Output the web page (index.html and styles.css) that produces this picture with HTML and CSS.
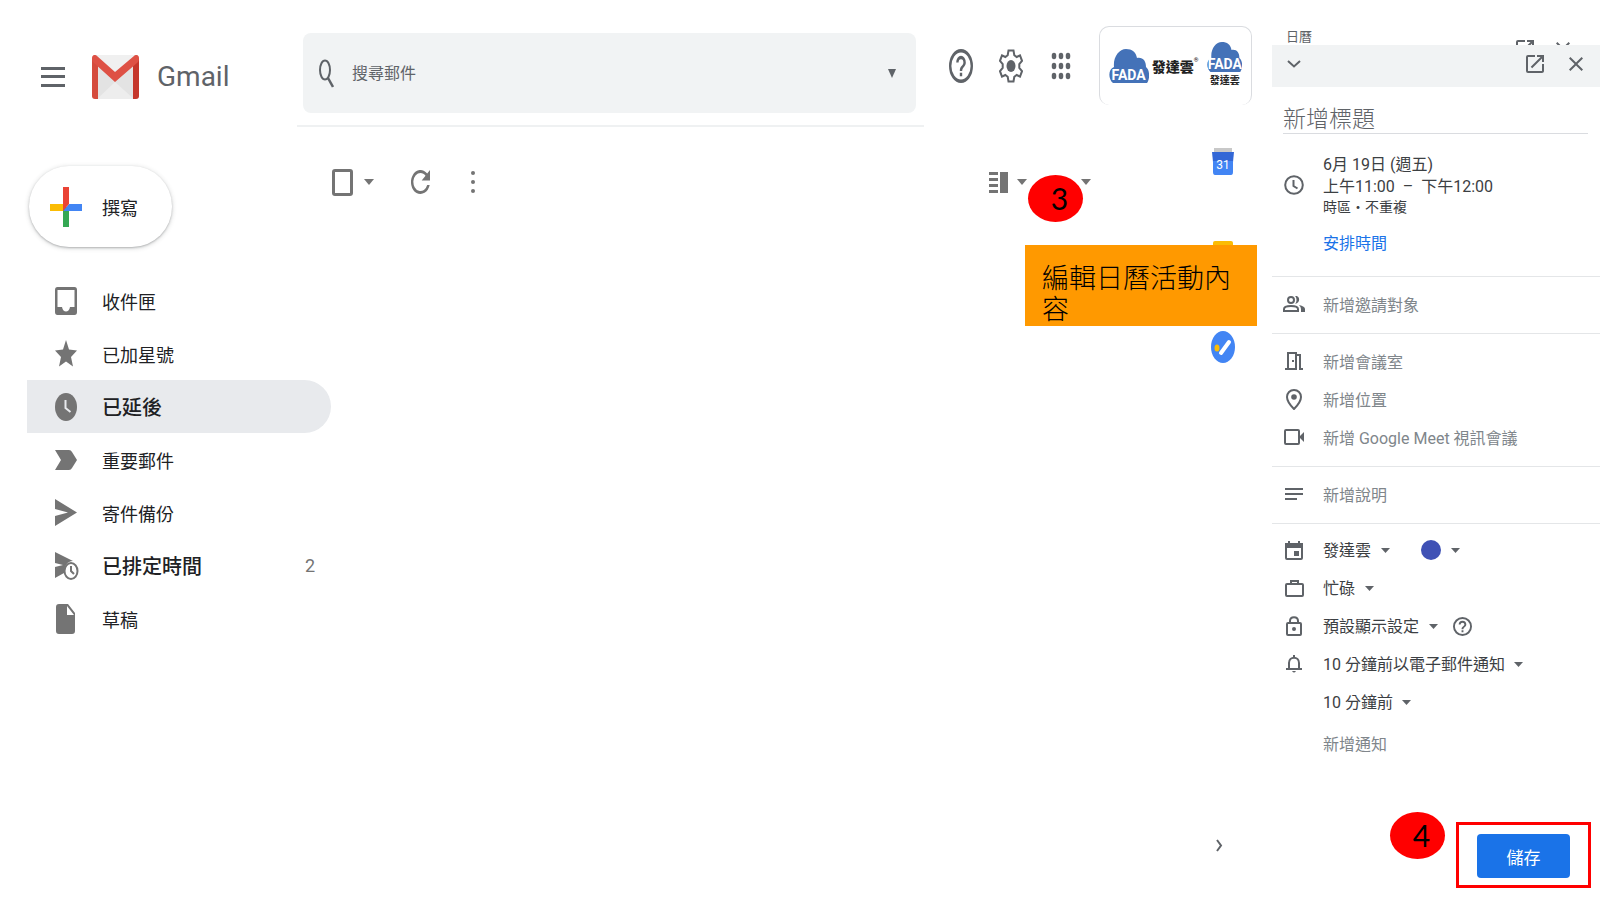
FILE: index.html
```
<!DOCTYPE html>
<html lang="zh-Hant">

<head>
  <meta charset="UTF-8">
  <meta name="viewport" content="width=device-width, initial-scale=1.0">
  <title>Gmail</title>
  <link rel="stylesheet" href="styles.css">
</head>

<body>
  <!-- shared shapes -->
  <svg class="defs" width="0" height="0" aria-hidden="true">
    <symbol id="arrow" viewBox="0 0 10 6" preserveAspectRatio="none"><path d="M0 0h10L5 6z" /></symbol>
    <symbol id="open" viewBox="0 0 24 24"><path d="M19 19H5V5h7V3H5a2 2 0 0 0-2 2v14a2 2 0 0 0 2 2h14c1.100 0 2-.9 2-2v-7h-2zM14 3v2h3.590l-9.830 9.830 1.410 1.410L19 6.410V10h2V3z" /></symbol>
    <symbol id="close" viewBox="0 0 24 24"><path d="M19 6.410L17.590 5 12 10.590 6.410 5 5 6.410 10.590 12 5 17.590 6.410 19 12 13.410 17.590 19 19 17.590 13.410 12z" /></symbol>
    <symbol id="help" viewBox="2 2 20 20" preserveAspectRatio="none"><path d="M11 18h2v-2h-2zm1-16a10 10 0 1 0 0 20 10 10 0 0 0 0-20zm0 18a8 8 0 1 1 0-16 8 8 0 0 1 0 16zm0-14a4 4 0 0 0-4 4h2a2 2 0 1 1 4 0c0 2-3 1.750-3 5h2c0-2.250 3-2.500 3-5a4 4 0 0 0-4-4z" /></symbol>
    <symbol id="cloud" viewBox="0 0 40 34" preserveAspectRatio="none"><path d="M4 34C-1 30-1 20 5 18 4 8 10 0 17 0c6 0 10 3 11 9 6-1 9 3 9 9 4 3 4 12 1 16z" /></symbol>
  </svg>

  <div class="mail">
    <header class="header">
      <div class="brand">
        <button class="icon-button" aria-label="主選單">
          <svg width="24" height="20" viewBox="0 0 24 20"><path d="M0 0h24v3H0zM0 8h24v3H0zM0 17h24v3H0z" /></svg>
        </button>
        <svg class="logo" width="47" height="44" viewBox="0 0 47 44" preserveAspectRatio="none">
          <path fill="#e3e3e3" d="M3 0h41v44H3z" />
          <path fill="#f0f0f0" d="M4 0h39L23 20z" />
          <path fill="#ededed" d="M5 44l18-17 19 17z" />
          <path fill="#d54b3d" d="M0 3l6 5v36H3c-2 0-3-1-3-3z" />
          <path fill="#c5372c" d="M47 3l-6 5v36h3c2 0 3-1 3-3z" />
          <path fill="#de5145" d="M0 3c0-3 3-4 5-2l18 16L42 1c2-2 5-1 5 2 0 2 0 3-2 5L23 27 2 8C0 6 0 5 0 3z" />
        </svg>
        <span class="brand-name">Gmail</span>
      </div>

      <div class="search-wrap">
        <form class="search">
          <svg width="15" height="29" viewBox="0 0 15 29" class="line"><ellipse cx="6" cy="11" rx="5" ry="9.500" /><path d="M9 19l5 9" stroke-width="2.500" /></svg>
          <input type="text" placeholder="搜尋郵件" aria-label="搜尋郵件">
          <svg class="arrow" width="8" height="9"><use href="#arrow" /></svg>
        </form>
      </div>

      <div class="tools">
        <button class="icon-button" aria-label="說明"><svg width="24" height="34"><use href="#help" /></svg></button>
        <button class="icon-button" aria-label="設定">
          <svg width="24" height="34" viewBox="0 0 24 34">
            <path class="line" d="M9.500 1.500h5l.8 4.700 2.400 1.800 3.300-1.700 2 5.500-2.700 3.200v4l2.700 3.200-2 5.500-3.300-1.700-2.400 1.800-.8 4.700h-5l-.8-4.700L6.300 26 3 27.700l-2-5.500L3.700 19v-4L1 11.800l2-5.500L6.300 8l2.400-1.800z" />
            <ellipse cx="12" cy="17" rx="4.500" ry="6" />
          </svg>
        </button>
        <button class="icon-button" aria-label="Google 應用程式">
          <svg width="20" height="28" viewBox="0 0 20 28">
            <g id="dots"><ellipse cx="3" cy="4" rx="2.300" ry="3.200" /><ellipse cx="10" cy="4" rx="2.300" ry="3.200" /><ellipse cx="17" cy="4" rx="2.300" ry="3.200" /></g>
            <use href="#dots" y="10" />
            <use href="#dots" y="20" />
          </svg>
        </button>
        <button class="account" aria-label="帳戶">
          <span class="fada"><svg width="40" height="34"><use href="#cloud" /></svg><b>FADA</b></span>
          <span class="company">發達雲<sup>®</sup></span>
          <span class="avatar">
            <span class="fada"><svg width="35" height="30"><use href="#cloud" /></svg><b>FADA</b></span>
            <small>發達雲</small>
          </span>
        </button>
      </div>
    </header>

    <div class="workspace">
      <aside class="sidebar">
        <button class="compose">
          <svg width="32" height="40" viewBox="0 0 32 40">
            <path fill="#fbbc04" d="M0 17h13v7H0z" /><path fill="#34a853" d="M13 20h6v20h-6z" />
            <path fill="#4285f4" d="M19 17h13v7H13z" /><path fill="#ea4335" d="M13 0h6v17l-6 7z" />
          </svg>
          撰寫
        </button>
        <nav>
          <a href="#inbox">
            <svg width="22" height="28" viewBox="0 0 22 28"><path fill-rule="evenodd" d="M2.500 0h17Q22 0 22 3v22q0 3-2.500 3h-17Q0 28 0 25V3Q0 0 2.500 0zM2.500 3v17h4.500c1 6 7 6 8 0h4.500V3z" /></svg>收件匣</a>
          <a href="#starred">
            <svg width="22" height="27" viewBox="0 0 22 27"><path d="M11 0l3 9.500 8 1-6 6.500 2 9.500-7-5-7 5L6 17l-6-6.500 8-1z" /></svg>已加星號</a>
          <a href="#snoozed" class="active">
            <svg width="22" height="28" viewBox="0 0 22 28"><ellipse cx="11" cy="14" rx="11" ry="14" /><path class="cut" d="M10.500 7v8l5 4" /></svg>已延後</a>
          <a href="#important">
            <svg width="22" height="20" viewBox="0 0 22 20"><path d="M0 0h14q2 0 3 2l5 8-5 8q-1 2-3 2H0l6-10z" /></svg>重要郵件</a>
          <a href="#sent">
            <svg width="22" height="27" viewBox="0 0 22 27"><path d="M0 0l22 13.500L0 27V17l13-3.500L0 10z" /></svg>寄件備份</a>
          <a href="#scheduled" class="unread">
            <svg width="24" height="28" viewBox="0 0 24 28"><path d="M0 0l18 9c-6 0-9 5-9 12l-9 5V15l8-2-8-2z" /><ellipse class="clock" cx="16" cy="19" rx="6.500" ry="8" /><path class="clock" d="M16 14v5l3 3" /></svg>已排定時間<span class="count">2</span></a>
          <a href="#drafts">
            <svg width="22" height="30" viewBox="0 0 22 30"><path fill-rule="evenodd" d="M4 0h9l7 9v18q0 3-3 3H4q-3 0-3-3V3q0-3 3-3zM12 2v9h7z" /></svg>草稿</a>
        </nav>
      </aside>

      <main class="content">
        <div class="toolbar">
          <input type="checkbox" aria-label="選取">
          <svg class="arrow" width="10" height="6"><use href="#arrow" /></svg>
          <button class="icon-button refresh" aria-label="重新整理">
            <svg width="19" height="24" viewBox="4 4 16 16" preserveAspectRatio="none"><path d="M17.650 6.350A8 8 0 1 0 19.730 14h-2.080A6 6 0 1 1 12 6c1.660 0 3.140.69 4.220 1.780L13 11h7V4z" /></svg>
          </button>
          <button class="icon-button" aria-label="更多">
            <svg width="4" height="24" viewBox="0 0 4 24"><circle cx="2" cy="3" r="2" /><circle cx="2" cy="12" r="2" /><circle cx="2" cy="21" r="2" /></svg>
          </button>
          <button class="icon-button split" aria-label="切換分割窗格模式">
            <svg width="19" height="21" viewBox="0 0 19 21"><path d="M0 0h9v3H0zM0 6h9v3H0zM0 12h9v3H0zM0 18h9v3H0zM11 0h8v21h-8z" /></svg>
            <svg class="arrow" width="10" height="6"><use href="#arrow" /></svg>
          </button>
          <button class="icon-button" aria-label="輸入工具"><svg class="arrow" width="10" height="6"><use href="#arrow" /></svg></button>
        </div>
      </main>

      <aside class="rail">
        <button class="icon-button" aria-label="日曆">
          <svg width="22" height="27" viewBox="0 0 22 27"><path fill="#c8c8c8" d="M2 0h18v5H2z" /><path fill="#3367d6" d="M0 4h22l-1 10H1z" /><path fill="#4285f4" d="M1 13h20v11q0 3-2 3H3q-2 0-2-3z" /><text x="11" y="21" text-anchor="middle">31</text></svg>
        </button>
        <button class="icon-button" aria-label="Keep">
          <svg width="20" height="27" viewBox="0 0 20 27"><rect width="20" height="27" rx="2" fill="#fbbc04" /><circle cx="10" cy="8" r="4" fill="#fff" /></svg>
        </button>
        <button class="icon-button" aria-label="Tasks">
          <svg width="24" height="32" viewBox="0 0 24 32"><ellipse cx="12" cy="16" rx="12" ry="16" fill="#4285f4" /><path d="M10 22l8-11" stroke="#fff" stroke-width="4" stroke-linecap="round" /><ellipse cx="6" cy="17" rx="2.500" ry="3.500" fill="#fbbc04" /></svg>
        </button>
        <button class="icon-button collapse" aria-label="隱藏側邊面板">
          <svg width="7" height="13" viewBox="0 0 7 13" class="line"><path d="M1 1l4 5.500L1 12" /></svg>
        </button>
      </aside>
    </div>

    <div class="badge badge-edit">3</div>
    <div class="callout">編輯日曆活動內容</div>
  </div>

  <aside class="calendar">
    <div class="calendar-top">
      <span>日曆</span>
      <svg width="24" height="24"><use href="#open" /></svg>
      <svg width="24" height="24"><use href="#close" /></svg>
    </div>
    <div class="calendar-bar">
      <button class="icon-button" aria-label="收合"><svg width="14" height="8" viewBox="0 0 14 8" class="line"><path d="M1 1l6 5.500L13 1" /></svg></button>
      <button class="icon-button end" aria-label="開啟"><svg width="24" height="24"><use href="#open" /></svg></button>
      <button class="icon-button" aria-label="關閉"><svg width="24" height="24"><use href="#close" /></svg></button>
    </div>
    <input class="title" type="text" placeholder="新增標題" aria-label="新增標題">

    <div class="time">
      <span class="icon"><svg width="20" height="20" viewBox="0 0 20 20" class="line"><circle cx="10" cy="10" r="8.800" /><path d="M9.500 5v6l4 2.500" /></svg></span>
      <div class="when">
        <p>6月 19日 (週五)</p>
        <p>上午11:00 &nbsp;– &nbsp;下午12:00</p>
        <p class="zone">時區・不重複</p>
      </div>
      <a href="#schedule">安排時間</a>
    </div>

    <section>
      <button class="row"><span class="icon"><svg width="22" height="16" viewBox="0 0 22 16"><g class="line"><circle cx="8" cy="4" r="3" /><path d="M1 15v-2c0-4 14-4 14 0v2z" /></g><path d="M12 0c5-1 6 7 0 8 2-2 2-6 0-8zM16 9c4 1 6 2 6 4v3h-4v-3q0-2-2-4z" /></svg></span>新增邀請對象</button>
    </section>

    <section>
      <button class="row"><span class="icon"><svg width="18" height="18" viewBox="0 0 18 18" class="line"><path d="M0 17h3V1h8v16H3M11 3h4v14h3" /><path d="M8 8v2" /></svg></span>新增會議室</button>
      <button class="row"><span class="icon"><svg width="16" height="21" viewBox="0 0 16 21"><path class="line" d="M8 1C4 1 1 4 1 8c0 5 7 12 7 12s7-7 7-12c0-4-3-7-7-7z" /><circle cx="8" cy="8" r="2.800" /></svg></span>新增位置</button>
      <button class="row"><span class="icon"><svg width="20" height="16" viewBox="0 0 20 16"><rect class="line" x="1" y="1" width="14" height="14" rx="1" /><path d="M15 8l5-5v10z" /></svg></span>新增 Google Meet 視訊會議</button>
    </section>

    <section>
      <button class="row"><span class="icon"><svg width="18" height="12" viewBox="0 0 18 12"><path d="M0 0h18v2H0zM0 5h18v2H0zM0 10h12v2H0z" /></svg></span>新增說明</button>
    </section>

    <section class="options">
      <div class="row">
        <span class="icon"><svg width="18" height="19" viewBox="0 0 18 19"><rect class="line" x="1" y="3" width="16" height="15" rx="1" /><path d="M0 2h3V0h2v2h8V0h2v2h3v5H0zM9 10h5v5H9z" /></svg></span>
        <select aria-label="日曆"><option>發達雲</option></select>
        <svg class="arrow" width="9" height="5"><use href="#arrow" /></svg>
        <button class="color" aria-label="顏色"><span></span><svg class="arrow" width="9" height="5"><use href="#arrow" /></svg></button>
      </div>
      <div class="row">
        <span class="icon"><svg width="19" height="17" viewBox="0 0 19 17" class="line"><rect x="1" y="4" width="17" height="12" rx="1" /><path d="M6 4V1h7v3" /></svg></span>
        <select aria-label="狀態"><option>忙碌</option></select>
        <svg class="arrow" width="9" height="5"><use href="#arrow" /></svg>
      </div>
      <div class="row">
        <span class="icon"><svg width="16" height="20" viewBox="0 0 16 20"><rect class="line" x="1" y="7" width="14" height="12" rx="1" /><path class="line" d="M4 7V5c0-5 8-5 8 0v2" /><circle cx="8" cy="13" r="2" /></svg></span>
        <select aria-label="瀏覽權限"><option>預設顯示設定</option></select>
        <svg class="arrow" width="9" height="5"><use href="#arrow" /></svg>
        <button class="icon-button" aria-label="說明"><svg width="19" height="19"><use href="#help" /></svg></button>
      </div>
      <div class="row">
        <span class="icon"><svg width="16" height="18" viewBox="0 0 16 18"><path class="line" d="M0 14h16M3 14V8c0-7 10-7 10 0v6M8 0v3" /><path d="M6 16h4q-2 3-4 0z" /></svg></span>
        <select aria-label="通知 1"><option>10 分鐘前以電子郵件通知</option></select>
        <svg class="arrow" width="9" height="5"><use href="#arrow" /></svg>
      </div>
      <div class="row">
        <span class="icon"></span>
        <select aria-label="通知 2"><option>10 分鐘前</option></select>
        <svg class="arrow" width="9" height="5"><use href="#arrow" /></svg>
      </div>
      <button class="row add-notice"><span class="icon"></span>新增通知</button>
    </section>

    <footer class="calendar-footer">
      <div class="badge badge-save">4</div>
      <div class="save-frame"><button class="save">儲存</button></div>
    </footer>
  </aside>
</body>

</html>
```
FILE: styles.css
```
* {
  box-sizing: border-box;
}

body {
  margin: 0;
  min-height: 100vh;
  display: flex;
  background-color: #fff;
  color: #202124;
  font-family: Roboto, "Noto Sans CJK TC", sans-serif;
  font-size: 16px;
}

button,
input,
select {
  font: inherit;
  color: inherit;
  border: 0;
  padding: 0;
  background: none;
}

button {
  cursor: pointer;
}

a {
  text-decoration: none;
}

svg {
  fill: #5f6368;
  flex: none;
}

.defs {
  position: absolute;
}

.line {
  fill: none;
  stroke: #5f6368;
  stroke-width: 2;
}

.icon-button {
  display: flex;
  align-items: center;
  justify-content: center;
}

.arrow {
  fill: #5f6368;
}

/* mail */
.mail {
  position: relative;
  flex: 1;
  display: flex;
  flex-direction: column;
}

.header {
  display: flex;
  padding-top: 26px;
}

.brand {
  width: 297px;
  display: flex;
  align-items: center;
  padding-left: 41px;
}

.logo {
  margin: 0 18px 0 27px;
}

.brand-name {
  font-size: 28px;
  color: #5f6368;
}

.search-wrap {
  flex: 1;
  padding: 7px 8px 12px 6px;
  border-bottom: 2px solid #eff1f2;
}

.search {
  height: 80px;
  display: flex;
  align-items: center;
  gap: 18px;
  padding: 0 20px 0 16px;
  border-radius: 8px;
  background-color: #f1f3f4;
}

.search input {
  flex: 1;
  min-width: 0;
  outline: none;
}

.search input::placeholder,
.title::placeholder {
  color: #5f6368;
  opacity: 1;
}

.tools {
  display: flex;
  align-items: flex-start;
  margin: 0 20px 0 25px;
}

.tools .icon-button {
  width: 24px;
  height: 80px;
  margin-right: 26px;
}

.account {
  width: 153px;
  height: 79px;
  display: flex;
  align-items: center;
  justify-content: center;
  gap: 3px;
  border: 1px solid #dadce0;
  border-bottom: 0;
  border-radius: 10px;
}

.fada {
  display: grid;
  justify-items: center;
  align-items: end;
}

.fada svg {
  fill: #4472b8;
}

.fada svg,
.fada b {
  grid-area: 1 / 1;
}

.fada b {
  color: #fff;
  font-size: 14px;
  line-height: 16px;
}

.company {
  display: flex;
  color: #222;
  font-size: 14px;
  font-weight: 900;
}

.company sup {
  font-size: 6px;
  line-height: 8px;
}

.avatar {
  margin-left: 6px;
  text-align: center;
}

.avatar small {
  display: block;
  color: #222;
  font-size: 10px;
  line-height: 18px;
  font-weight: 700;
}

.workspace {
  flex: 1;
  display: flex;
}

.sidebar {
  width: 331px;
  padding-top: 39px;
}

.compose {
  width: 143px;
  height: 81px;
  display: flex;
  align-items: center;
  gap: 20px;
  margin: 0 0 27px 29px;
  padding-left: 21px;
  border-radius: 40px;
  font-size: 18px;
  background-color: #fff;
  box-shadow: 0 1px 2px rgba(60, 64, 67, 0.300), 0 1px 4px 1px rgba(60, 64, 67, 0.150);
}

nav a {
  height: 53px;
  display: flex;
  align-items: center;
  margin-left: 27px;
  padding: 0 16px 0 28px;
  border-radius: 0 27px 27px 0;
  color: #202124;
  font-size: 18px;
}

nav svg {
  fill: #747474;
  margin-right: 25px;
}

nav .active {
  background-color: #e8eaed;
  font-size: 20px;
  font-weight: 500;
}

nav .unread {
  font-size: 20px;
  font-weight: 500;
}

nav .unread svg {
  margin-right: 23px;
}

.count {
  margin-left: auto;
  color: #747474;
  font-size: 18px;
  font-weight: 400;
}

.cut {
  fill: none;
  stroke: #e8eaed;
  stroke-width: 2;
}

.clock {
  fill: #fff;
  stroke: #747474;
  stroke-width: 2;
}

.content {
  flex: 1;
  padding-top: 35px;
}

.toolbar {
  height: 40px;
  display: flex;
  align-items: center;
  padding-right: 83px;
}

.toolbar svg {
  fill: #747474;
}

.toolbar input {
  appearance: none;
  width: 21px;
  height: 27px;
  margin: 0 11px 0 1px;
  border: 3px solid #747474;
  border-radius: 3px;
}

.refresh {
  margin: 0 41px 0 37px;
}

.split {
  gap: 9px;
  margin: 0 54px 0 auto;
}

.rail {
  width: 98px;
  display: flex;
  flex-direction: column;
  align-items: center;
  gap: 61px;
  padding: 18px 0 48px;
}

.rail .icon-button {
  height: 32px;
}

.rail text {
  fill: #fff;
  font-size: 12px;
}

.rail .collapse {
  height: 13px;
  margin: auto 8px 0 0;
}

/* numbered steps */
.badge {
  position: absolute;
  width: 55px;
  height: 47px;
  padding-left: 8px;
  border-radius: 50%;
  background-color: #f00;
  color: #000;
  font-family: Lato, sans-serif;
  font-size: 30px;
  line-height: 47px;
  text-align: center;
}

.badge-edit {
  top: 175px;
  right: 189px;
}

.badge-save {
  right: 155px;
  bottom: 41px;
}

.callout {
  position: absolute;
  top: 245px;
  right: 15px;
  width: 232px;
  padding: 19px 17px 0;
  background-color: #f90;
  color: #000;
  font-size: 27px;
  font-weight: 300;
  line-height: 31px;
}

/* calendar panel */
.calendar {
  position: relative;
  width: 328px;
  display: flex;
  flex-direction: column;
  color: #3c4043;
}

.calendar-top {
  height: 45px;
  overflow: hidden;
  display: flex;
  gap: 14px;
  padding: 28px 25px 0 14px;
  font-size: 13px;
  line-height: 18px;
  color: #5f6368;
}

.calendar-top span {
  flex: 1;
}

.calendar-top svg {
  margin-top: 9px;
}

.calendar-bar {
  height: 42px;
  display: flex;
  align-items: center;
  gap: 17px;
  padding: 0 12px 4px 15px;
  background-color: #f1f3f4;
}

.end {
  margin-left: auto;
}

.title {
  height: 34px;
  margin: 13px 12px 20px 11px;
  padding-top: 5px;
  border-bottom: 1px solid #dadce0;
  outline: none;
  font-size: 23px;
  font-weight: 300;
}

.icon {
  width: 22px;
  display: flex;
  justify-content: center;
  margin-right: 18px;
  flex: none;
}

.time {
  display: grid;
  grid-template-columns: 40px 1fr;
  align-items: center;
  padding: 0 11px 20px;
}

.when p {
  margin: 0;
  line-height: 22px;
}

.when .zone {
  font-size: 14px;
  line-height: 18px;
}

.time a {
  grid-column: 2;
  margin-top: 16px;
  color: #1a73e8;
  line-height: 24px;
}

section {
  display: flex;
  flex-direction: column;
  padding: 8px 11px 10px;
  border-top: 1px solid #e4e6e8;
}

.row {
  height: 38px;
  display: flex;
  align-items: center;
}

button.row {
  color: #80868b;
}

.options {
  padding-top: 7px;
}

.row select {
  appearance: none;
  margin-right: 9px;
}

.row .icon-button {
  margin-left: 15px;
}

.row.add-notice {
  height: 44px;
}

.color {
  display: flex;
  align-items: center;
  gap: 10px;
  margin-left: 31px;
}

.color span {
  width: 20px;
  height: 20px;
  border-radius: 50%;
  background-color: #3f51b5;
}

.calendar-footer {
  display: flex;
  justify-content: flex-end;
  margin-top: auto;
  padding: 0 9px 12px;
}

.save-frame {
  padding: 9px 18px 7px;
  border: 3px solid #f00;
}

.save {
  width: 93px;
  height: 44px;
  border-radius: 4px;
  background-color: #1a73e8;
  color: #fff;
  font-size: 17px;
}
```
